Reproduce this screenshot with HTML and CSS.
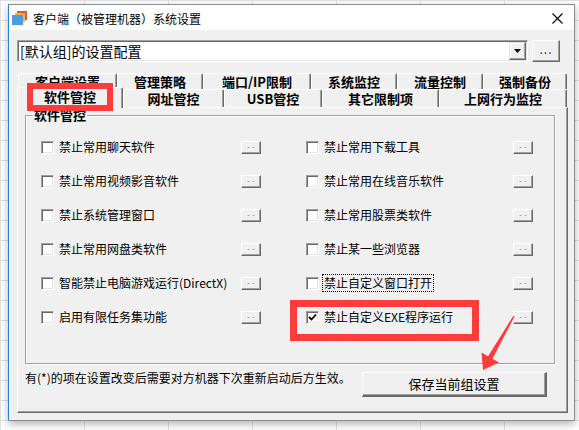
FILE: index.html
```html
<!DOCTYPE html>
<html lang="zh-CN">
<head>
    <meta charset="UTF-8">
    <title>客户端（被管理机器）系统设置</title>
    <link rel="stylesheet" href="styles.css">
</head>
<body>
    <div class="desk">
        <div class="win">
            <div class="titlebar">
                <svg class="appicon" width="15" height="14" viewBox="0 0 15 14">
                    <rect x="5" y="0" width="10" height="9" fill="#e8513d"/>
                    <rect x="3" y="2" width="10" height="9" fill="#f6b33f"/>
                    <rect x="0" y="4" width="11" height="10" fill="#4b9de3"/>
                </svg>
                <span class="title">客户端（被管理机器）系统设置</span>
                <svg class="close" width="11" height="11" viewBox="0 0 11 11">
                    <path d="M0.5 0.5 L10.5 10.5 M10.5 0.5 L0.5 10.5" stroke="#000" stroke-width="1.1"/>
                </svg>
            </div>

            <div class="client">
                <div class="combo-row">
                    <div class="combo">
                        <span class="combo-text">[默认组]的设置配置</span>
                        <span class="drop">
                            <svg width="7" height="4" viewBox="0 0 7 4"><path d="M0 0 H7 L3.5 4 Z" fill="#000"/></svg>
                        </span>
                    </div>
                    <div class="raised more">...</div>
                </div>

                <div class="tabs">
                    <div class="tabrow back">
                        <div class="tab" style="width:99px">客户端设置</div>
                        <div class="tab" style="width:86px">管理策略</div>
                        <div class="tab" style="width:108px">端口/IP限制</div>
                        <div class="tab" style="width:86px">系统监控</div>
                        <div class="tab" style="width:86px">流量控制</div>
                        <div class="tab" style="width:84px">强制备份</div>
                    </div>
                    <div class="tabrow front">
                        <div class="tab active" style="width:106px">软件管控</div>
                        <div class="tab" style="width:101px">网址管控</div>
                        <div class="tab" style="width:98px">USB管控</div>
                        <div class="tab" style="width:117px">其它限制项</div>
                        <div class="tab" style="width:128px">上网行为监控</div>
                    </div>
                </div>

                <div class="panel">
                    <fieldset class="group">
                        <legend>软件管控</legend>
                        <div class="items">
                            <div class="item"><span class="check"></span><span class="label">禁止常用聊天软件</span><span class="raised mini">- -</span></div>
                            <div class="item"><span class="check"></span><span class="label">禁止常用下载工具</span><span class="raised mini">- -</span></div>
                            <div class="item"><span class="check"></span><span class="label">禁止常用视频影音软件</span><span class="raised mini">- -</span></div>
                            <div class="item"><span class="check"></span><span class="label">禁止常用在线音乐软件</span><span class="raised mini">- -</span></div>
                            <div class="item"><span class="check"></span><span class="label">禁止系统管理窗口</span><span class="raised mini">- -</span></div>
                            <div class="item"><span class="check"></span><span class="label">禁止常用股票类软件</span><span class="raised mini">- -</span></div>
                            <div class="item"><span class="check"></span><span class="label">禁止常用网盘类软件</span><span class="raised mini">- -</span></div>
                            <div class="item"><span class="check"></span><span class="label">禁止某一些浏览器</span><span class="raised mini">- -</span></div>
                            <div class="item"><span class="check"></span><span class="label">智能禁止电脑游戏运行(DirectX)</span><span class="raised mini">- -</span></div>
                            <div class="item"><span class="check"></span><span class="label focus">禁止自定义窗口打开</span><span class="raised mini">- -</span></div>
                            <div class="item"><span class="check"></span><span class="label">启用有限任务集功能</span><span class="raised mini">- -</span></div>
                            <div class="item">
                                <span class="check">
                                    <svg width="9" height="9" viewBox="0 0 9 9"><path d="M1 4 L3.5 6.5 L8 1.5" stroke="#000" stroke-width="1.8" fill="none"/></svg>
                                </span>
                                <span class="label">禁止自定义EXE程序运行</span><span class="raised mini">- -</span>
                            </div>
                        </div>
                    </fieldset>

                    <div class="footer">
                        <span class="note">有(*)的项在设置改变后需要对方机器下次重新启动后方生效。</span>
                        <div class="raised save">保存当前组设置</div>
                    </div>
                </div>
            </div>
        </div>

        <!-- annotations drawn over the screenshot -->
        <div class="mark mark-tab"></div>
        <div class="mark mark-item"></div>
        <svg class="arrow" width="579" height="430" viewBox="0 0 579 430">
            <polygon points="513.4,315.7 514.6,316.4 492.2,359.3 487.8,356.8" fill="#ff3c3c"/>
            <polygon points="481.5,352.5 499,362.5 483,370" fill="#ff3c3c"/>
        </svg>
    </div>
</body>
</html>
```

FILE: styles.css
```css
body {
    margin: 0;
    font-family: "Noto Sans CJK SC", "Microsoft YaHei", sans-serif;
    font-size: 12px;
    color: #000;
}
.desk {
    position: relative;
    width: 579px;
    height: 430px;
    overflow: hidden;
    background-color: #fff;
    background-image:
        linear-gradient(#e2e2e2 1px, transparent 1px),
        linear-gradient(90deg, #e2e2e2 1px, transparent 1px);
    background-size: 84px 20px;
    padding: 4px 0 0 8px;
    box-sizing: border-box;
}
.win {
    width: 567px;
    height: 417px;
    box-sizing: border-box;
    border: 1px solid #8e8e8e;
    border-left-color: #2a83d6;
    background: #f0f0f0;
    box-shadow: 0 3px 8px rgba(0, 0, 0, 0.3);
}

/* title bar */
.titlebar {
    height: 25px;
    background: #fff;
    display: flex;
    align-items: center;
    padding-left: 3px;
}
.appicon {
    margin-top: 1px;
}
.title {
    margin-left: 6px;
    font-size: 12px;
    line-height: 16px;
    margin-top: 2px;
}
.close {
    margin-left: auto;
    margin-right: 11px;
    margin-top: 2px;
}

.client {
    padding: 10px 0 0 8px;
}

/* classic 3d bits */
.raised {
    background: #f0f0f0;
    border-top: 1px solid #fff;
    border-left: 1px solid #fff;
    border-right: 1px solid #696969;
    border-bottom: 1px solid #696969;
    box-shadow: inset -1px -1px 0 #a0a0a0;
    box-sizing: border-box;
}

/* combo */
.combo-row {
    display: flex;
    align-items: flex-start;
}
.combo {
    width: 511px;
    height: 22px;
    box-sizing: border-box;
    background: #fff;
    border-top: 1px solid #a0a0a0;
    border-left: 1px solid #a0a0a0;
    border-right: 1px solid #fff;
    border-bottom: 1px solid #fff;
    box-shadow: inset 1px 1px 0 #696969, inset -1px -1px 0 #e3e3e3;
    display: flex;
    align-items: center;
    padding: 2px 1px 2px 2px;
}
.combo-text {
    font-size: 14px;
    line-height: 18px;
    flex: 1;
}
.drop {
    width: 17px;
    height: 18px;
    box-sizing: border-box;
    background: #f0f0f0;
    border-top: 1px solid #e3e3e3;
    border-left: 1px solid #e3e3e3;
    border-right: 1px solid #696969;
    border-bottom: 1px solid #696969;
    box-shadow: inset -1px -1px 0 #a0a0a0, inset 1px 1px 0 #fff;
    display: flex;
    align-items: center;
    justify-content: center;
}
.more {
    width: 28px;
    height: 22px;
    margin-left: 4px;
    text-align: center;
    font-size: 12px;
    line-height: 16px;
    letter-spacing: 1px;
    color: #333;
}

/* tabs */
.tabs {
    margin-top: 11px;
}
.tabrow {
    display: flex;
}
.tabrow.back {
    margin-left: 1px;
    height: 16px;
}
.tabrow.front {
    height: 18px;
}
.tab {
    box-sizing: border-box;
    background: #f0f0f0;
    border-top: 1px solid #fff;
    border-left: 1px solid #fff;
    border-right: 1px solid #696969;
    box-shadow: inset -1px 0 0 #a0a0a0;
    border-radius: 2px 2px 0 0;
    text-align: center;
    font-size: 13px;
    font-weight: bold;
    line-height: 16px;
    white-space: nowrap;
}
.tabrow.front .tab {
    line-height: 17px;
}
.tab.active {
    position: relative;
    z-index: 1;
    height: 21px;
    margin-top: -2px;
    margin-bottom: -1px;
    line-height: 20px;
}

/* panel */
.panel {
    width: 551px;
    height: 306px;
    box-sizing: border-box;
    border-top: 1px solid #fff;
    border-left: 1px solid #fff;
    border-right: 1px solid #696969;
    border-bottom: 1px solid #696969;
    box-shadow: inset -1px -1px 0 #a0a0a0;
}
.group {
    width: 530px;
    box-sizing: border-box;
    margin: 0 0 0 7px;
    padding: 0;
    min-width: 0;
    border: 1px solid #a0a0a0;
    box-shadow: inset 1px 1px 0 #fff, 1px 1px 0 #fff;
}
.group legend {
    margin-left: 7px;
    padding: 0 1px;
    background: #f0f0f0;
    font-size: 13px;
    font-weight: bold;
    line-height: 14px;
}
.items {
    display: grid;
    grid-template-columns: 220px 227px;
    column-gap: 45px;
    row-gap: 14px;
    padding: 15px 0 36px 15px;
}
.item {
    height: 20px;
    display: flex;
    align-items: center;
}
.check {
    width: 13px;
    height: 13px;
    box-sizing: border-box;
    background: #fff;
    border-top: 1px solid #a0a0a0;
    border-left: 1px solid #a0a0a0;
    border-right: 1px solid #fff;
    border-bottom: 1px solid #fff;
    box-shadow: inset 1px 1px 0 #696969, inset -1px -1px 0 #e3e3e3;
    display: flex;
    align-items: center;
    justify-content: center;
    flex: none;
}
.label {
    margin-left: 5px;
    font-size: 12px;
    line-height: 14px;
    white-space: nowrap;
}
.label.focus {
    outline: 1px dotted #000;
    outline-offset: 1px;
}
.mini {
    margin-left: auto;
    width: 20px;
    height: 13px;
    font-size: 8px;
    line-height: 10px;
    text-align: center;
    color: #808080;
    flex: none;
}

/* footer */
.footer {
    display: flex;
    align-items: flex-start;
    margin-top: 8px;
    padding-left: 7px;
}
.note {
    font-size: 12px;
    line-height: 14px;
    margin-top: -1px;
    white-space: nowrap;
}
.save {
    margin-left: auto;
    margin-right: 20px;
    width: 185px;
    height: 25px;
    text-align: center;
    font-size: 13px;
    line-height: 22px;
    border-right-width: 2px;
    border-bottom-width: 2px;
}

/* annotations */
.mark {
    position: absolute;
    z-index: 2;
    box-sizing: border-box;
    border: 6px solid #ff3c3c;
}
.mark-tab {
    left: 27px;
    top: 83px;
    width: 86px;
    height: 28px;
}
.mark-item {
    left: 290px;
    top: 300px;
    width: 189px;
    height: 41px;
    border-width: 7px;
}
.arrow {
    position: absolute;
    z-index: 2;
    left: 0;
    top: 0;
    pointer-events: none;
}
```
